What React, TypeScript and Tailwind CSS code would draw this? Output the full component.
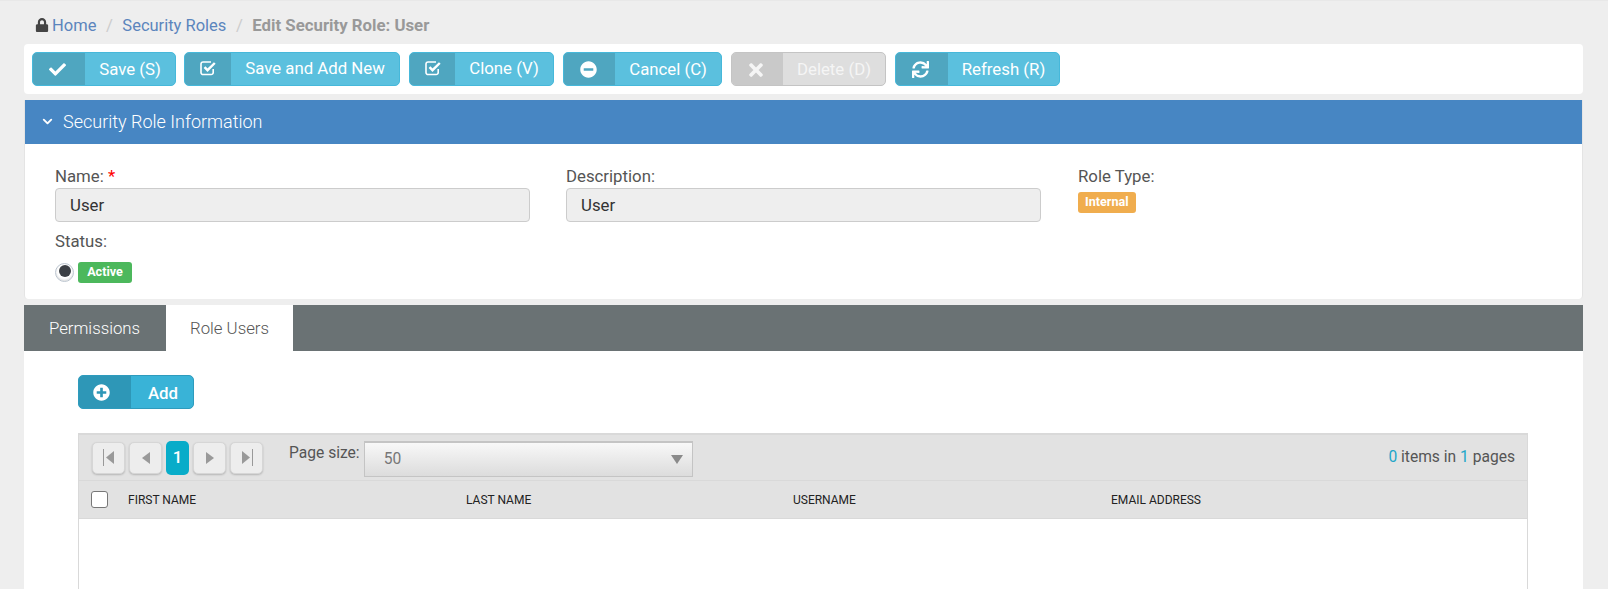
import React from "react";
import { FaCheck, FaLock, FaMinusCircle, FaPlusCircle, FaSync, FaTimes } from "react-icons/fa";
import { ChevronDown } from "lucide-react";

const CheckSquare: React.FC = () => (
  <svg className="mb-[2px] ml-[4px]" width="17" height="15" viewBox="0 0 17 15" fill="none" stroke="white">
    <path d="M11 2H3.5A2 2 0 0 0 1 4v8.5a2 2 0 0 0 2.5 2H11a2 2 0 0 0 2.2-2V9" strokeWidth="1.6" transform="translate(0 -1)" />
    <path d="M4.5 6.2l3 3L14.8 2" strokeWidth="2.4" />
  </svg>
);

const ActionButton: React.FC<{
  icon: React.ReactNode;
  label: string;
  iconWidth: string;
  width: string;
  raised?: boolean;
  disabled?: boolean;
}> = ({ icon, label, iconWidth, width, raised, disabled }) => (
  <button
    className={`flex h-[34px] items-stretch overflow-hidden rounded-[5px] border text-[16.8px] ${width} ${
      disabled ? "border-[#c4c4c4] bg-[#dedede] text-[#f5f5f5]" : "border-[#46b8da] bg-[#5bc0de] text-white"
    }`}
  >
    <span className={`flex items-center justify-center pr-[3px] pt-[1px] ${iconWidth} ${disabled ? "bg-[#c9c9c9]" : "bg-[#4fa6c0]"}`}>
      {icon}
    </span>
    <span className={`flex flex-1 items-center justify-center ${raised ? "pb-[1px]" : "pt-[2px]"}`}>{label}</span>
  </button>
);

const Field: React.FC<{ label: React.ReactNode; value: string }> = ({ label, value }) => (
  <div>
    <div className="h-[22px] pt-[1px] text-[16.8px] leading-[22px] text-[#555]">{label}</div>
    <div className="mt-[2px] flex h-[34px] w-[475px] items-center rounded border border-[#ccc] bg-[#eee] px-[14px] pt-[1px] text-[16.8px] text-[#333]">
      {value}
    </div>
  </div>
);

const PagerButton: React.FC<{ children: React.ReactNode }> = ({ children }) => (
  <span className="flex h-[32px] w-[33px] items-center justify-center rounded-[5px] border border-[#d6d6d6] bg-[#ededed] shadow-[0_1px_2px_rgba(0,0,0,0.2)]">
    {children}
  </span>
);

const App: React.FC = () => {
  return (
    <div className="h-[589px] overflow-hidden border-t border-[#e8e8e8] bg-[#eeeeee] pl-[24px] pr-[25px] font-['Roboto',sans-serif]">
      <div className="flex h-[43px] items-center pl-[11px] pt-[7px] text-[16.8px] text-[#999]">
        <FaLock className="mb-[2px] mr-[3px] text-[14px] text-[#444]" />
        <a className="text-[16.5px] text-[#5b85bd]">Home</a>
        <span className="mx-[9.5px] text-[#ccc]">/</span>
        <a className="text-[16.5px] text-[#5b85bd]">Security Roles</a>
        <span className="mx-[9.5px] text-[#ccc]">/</span>
        <b className="font-bold text-[#999]">Edit Security Role: User</b>
      </div>

      <div className="flex h-[50px] items-center gap-[9px] rounded-[4px] bg-white pl-[8px]">
        <ActionButton width="w-[144px] mr-[-1px]" iconWidth="w-[52px]" label="Save (S)" icon={<FaCheck className="text-[17px]" />} />
        <ActionButton width="w-[216px]" iconWidth="w-[46px]" raised label="Save and Add New" icon={<CheckSquare />} />
        <ActionButton width="w-[145px]" iconWidth="w-[45px]" raised label="Clone (V)" icon={<CheckSquare />} />
        <ActionButton width="w-[159px]" iconWidth="w-[51px]" label="Cancel (C)" icon={<FaMinusCircle className="text-[17px]" />} />
        <ActionButton width="w-[155px]" iconWidth="w-[51px]" disabled label="Delete (D)" icon={<FaTimes className="text-[20px]" />} />
        <ActionButton width="w-[165px]" iconWidth="w-[52px]" label="Refresh (R)" icon={<FaSync className="text-[17px]" />} />
      </div>

      <div className="mt-[6px] rounded-b-[4px] border-x border-[#e4e4e4] bg-white">
        <div className="flex h-[44px] items-center bg-[#4786c3] pb-[1px] pl-[15px] text-[18px] font-light text-white">
          <ChevronDown size={15} strokeWidth={3} className="mr-[8px]" />
          Security Role Information
        </div>

        <div className="h-[155px] pl-[30px] pt-[20px]">
          <div className="flex">
            <Field label={<>Name: <span className="text-[#f00]">*</span></>} value="User" />
            <div className="ml-[36px]">
              <Field label="Description:" value="User" />
            </div>
            <div className="ml-[37px]">
              <div className="h-[22px] pt-[1px] text-[16.8px] leading-[22px] text-[#555]">Role Type:</div>
              <span className="mt-[6px] inline-flex h-[21px] items-center rounded-[3px] bg-[#f0ad4e] px-[7px] text-[12.6px] font-bold text-white">Internal</span>
            </div>
          </div>
          <div className="mt-[8px] h-[22px] text-[16.8px] leading-[22px] text-[#555]">Status:</div>
          <div className="mt-[10px] flex items-center gap-[4px]">
            <span className="flex h-[19px] w-[19px] justify-center rounded-full border border-[#bcc5cf] bg-white pt-[1px] shadow-[inset_0_-1px_2px_rgba(0,0,0,0.15)]">
              <span className="h-[12px] w-[12px] rounded-full bg-[#3b3f44]" />
            </span>
            <span className="inline-flex h-[21px] w-[54px] items-center justify-center rounded-[3px] bg-[#4cb85c] text-[12.6px] font-bold text-white">Active</span>
          </div>
        </div>
      </div>

      <div className="mt-[6px] flex h-[46px] bg-[#6a7274] text-[16.8px] font-light">
        <div className="flex w-[142px] items-center justify-center pr-[1px] pt-[2px] text-white">Permissions</div>
        <div className="flex w-[127px] items-center justify-center bg-white pt-[2px] text-[#555]">Role Users</div>
      </div>

      <div className="h-[240px] bg-white pl-[54px] pr-[55px] pt-[24px]">
        <button className="flex h-[34px] w-[116px] items-stretch overflow-hidden rounded-[5px] border border-[#2e9bbd] bg-[#39b3d7] text-[16.8px] font-medium text-white">
          <span className="flex w-[52px] items-center justify-center bg-[#2e97b7] pr-[8px]">
            <FaPlusCircle className="text-[17px]" />
          </span>
          <span className="flex flex-1 items-center justify-center pl-[2px] pt-[4px]">Add</span>
        </button>

        <div className="mt-[24px] h-[200px] border border-t-[2px] border-[#d9d9d9]">
          <div className="flex h-[46px] items-center border-b border-[#d9d9d9] bg-[#e2e2e2] pl-[13px] pr-[12px]">
            <div className="flex items-center gap-[4px]">
              <PagerButton>
                <svg width="12" height="17" viewBox="0 0 12 17"><path d="M0.5 0v17" stroke="#999" /><path d="M11 2v13L3 8.5z" fill="#999" /></svg>
              </PagerButton>
              <PagerButton>
                <svg width="10" height="14" viewBox="0 0 10 14"><path d="M9 1v12L1 7z" fill="#999" /></svg>
              </PagerButton>
              <span className="flex h-[34px] w-[23px] items-center justify-center rounded-[5px] bg-[#08acc9] text-[16.8px] font-medium text-white">1</span>
              <PagerButton>
                <svg width="10" height="14" viewBox="0 0 10 14"><path d="M1 1v12l8-6z" fill="#999" /></svg>
              </PagerButton>
              <PagerButton>
                <svg width="12" height="17" viewBox="0 0 12 17"><path d="M11.5 0v17" stroke="#999" /><path d="M1 2v13l8-6.5z" fill="#999" /></svg>
              </PagerButton>
            </div>
            <span className="ml-[26px] pb-[8px] text-[15.6px] text-[#555]">Page size:</span>
            <div className="ml-[4px] mt-[3px] flex h-[36px] w-[329px] items-center justify-between border border-t-[2px] border-[#c4c4c4] bg-gradient-to-b from-[#f8f8f8] to-[#dcdcdc] pl-[19px] pr-[9px] text-[15.6px] text-[#777]">
              <span className="pt-[1px]">50</span>
              <svg width="12" height="9" viewBox="0 0 12 9"><path d="M0 0h12L6 9z" fill="#8a8a8a" /></svg>
            </div>
            <span className="ml-auto pt-[1px] text-[15.6px] text-[#555]">
              <span className="text-[#21a6c9]">0</span> items in <span className="text-[#21a6c9]">1</span> pages
            </span>
          </div>
          <div className="flex h-[38px] items-center border-b border-[#d9d9d9] bg-[#e2e2e2] pl-[12px] text-[12px] uppercase text-[#222]">
            <span className="h-[17px] w-[17px] rounded-[3px] border border-[#777] bg-white" />
            <span className="ml-[20px] w-[338px]">First Name</span>
            <span className="w-[327px]">Last Name</span>
            <span className="w-[318px]">Username</span>
            <span>Email Address</span>
          </div>
        </div>
      </div>
    </div>
  );
};

export default App;
